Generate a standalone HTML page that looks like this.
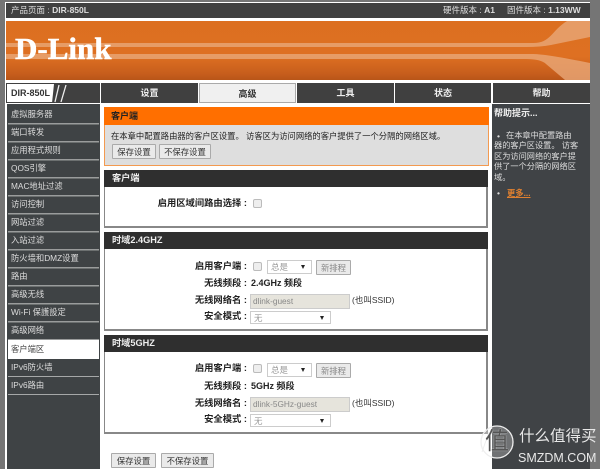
<!DOCTYPE html>
<html><head><meta charset="utf-8">
<style>
html,body{margin:0;padding:0;width:600px;height:469px;overflow:hidden;background:#757575;}
body{position:relative;font-family:"Liberation Sans","Noto Sans CJK SC",sans-serif;font-size:8.300px;color:#222;}
div,span{position:absolute;white-space:nowrap;box-sizing:border-box;}
.navt{top:83px;height:20px;background:#404040;color:#eee;font-weight:bold;text-align:center;line-height:21px;font-size:9px;}
.side{left:11px;height:17px;color:#ddd;line-height:17px;font-size:8.300px;}
.hd{left:104px;width:384px;height:17px;background:#2f2f2f;color:#eee;font-weight:bold;line-height:17px;padding-left:8px;font-size:9.200px;}
.box{left:104px;width:384px;background:#fff;border:1px solid #888;border-bottom-width:2px;border-right-width:2px;}
.lb{font-weight:bold;text-align:right;width:120px;left:127px;font-size:9.300px;line-height:12px;color:#222;}
.t{font-size:8.500px;line-height:12px;}
.btn{background:#eaeaea;border:1px solid #aaa;height:15px;line-height:14px;text-align:center;font-size:8.400px;color:#333;border-radius:1px;}
.cb{width:9px;height:9px;background:#eee;border:1px solid #bbb;border-radius:2px;}
.sel{background:#fff;border:1px solid #ccc;height:13px;line-height:12px;padding-left:3px;color:#999;font-size:8.500px;}
.sel i{position:absolute;right:6px;top:4px;width:0;height:0;border-left:2.500px solid transparent;border-right:2.500px solid transparent;border-top:4px solid #222;}
.inp{left:250px;width:100px;height:15px;background:#e6e4dc;border:1px solid #ccc;line-height:13px;padding-left:2px;color:#888;font-size:8.300px;}
</style></head><body>
<!-- page -->
<div style="left:5px;top:2px;width:585px;height:467px;background:#fff"></div>
<!-- top bar -->
<div style="left:6px;top:3px;width:584px;height:15px;background:#404040"></div>
<div class="t" style="left:11px;top:4px;color:#ddd">产品页面 : <b>DIR-850L</b></div>
<div class="t" style="left:443px;top:4px;color:#ddd">硬件版本 : <b>A1</b></div>
<div class="t" style="left:507px;top:4px;color:#ddd">固件版本 : <b>1.13WW</b></div>
<!-- banner -->
<div style="left:6px;top:21px;width:584px;height:59px;background:linear-gradient(#dc6f20 0,#de7022 60%,#c65d1c 90%,#b85518 100%)"></div>
<svg style="position:absolute;left:6px;top:21px" width="584" height="59" viewBox="0 0 584 59">
<path d="M0 22H527C545 22 545 10 561 0H584V16L545 24Q535 26 520 26H0Z" fill="#e8a878" opacity=".8"/>
<path d="M0 33H527Q540 33 584 42V59H559L540 43Q535 38 520 38H0Z" fill="#e8a878" opacity=".8"/>
</svg>
<div style="left:15px;top:33px;font-family:'Liberation Serif',serif;font-weight:bold;font-size:31px;line-height:32px;color:#fff;-webkit-text-stroke:.5px #fff">D-Link</div>
<!-- nav -->
<div style="left:6px;top:83px;width:94px;height:20px;background:#404040"></div>
<div style="left:7px;top:84px;width:47px;height:18px;background:#fff;clip-path:polygon(0 0,100% 0,96% 100%,0 100%);font-weight:bold;font-size:9px;line-height:18px;padding-left:4px;color:#333;overflow:hidden">DIR-850L</div>
<svg style="position:absolute;left:52px;top:83px" width="16" height="20"><path d="M3 19L7 2M9 19L14 2" stroke="#eee" stroke-width="1.300" fill="none"/></svg>
<div class="navt" style="left:101px;width:97px">设置</div>
<div class="navt" style="left:199px;width:97px;background:#f0f0f0;color:#333;border:1px solid #aaa">高级</div>
<div class="navt" style="left:297px;width:97px">工具</div>
<div class="navt" style="left:395px;width:96px">状态</div>
<div class="navt" style="left:493px;width:97px">帮助</div>
<!-- sidebar -->
<div style="left:7px;top:104px;width:93px;height:365px;background:#3f4345"></div>
<div style="left:8px;top:123px;width:91px;height:236px;background:repeating-linear-gradient(#9a9c9c 0,#9a9c9c 1.500px,#3f4345 1.500px,#3f4345 18px)"></div>
<div style="left:8px;top:340px;width:91px;height:19px;background:#fff"></div>
<div style="left:8px;top:376px;width:91px;height:1px;background:#a6a8a8"></div>
<div style="left:8px;top:394px;width:91px;height:1px;background:#a6a8a8"></div>
<div class="side" style="top:106px">虚拟服务器</div>
<div class="side" style="top:124px">端口转发</div>
<div class="side" style="top:142px">应用程式规则</div>
<div class="side" style="top:160px">QOS引擎</div>
<div class="side" style="top:178px">MAC地址过滤</div>
<div class="side" style="top:196px">访问控制</div>
<div class="side" style="top:214px">网站过滤</div>
<div class="side" style="top:232px">入站过滤</div>
<div class="side" style="top:250px">防火墙和DMZ设置</div>
<div class="side" style="top:268px">路由</div>
<div class="side" style="top:286px">高级无线</div>
<div class="side" style="top:304px">Wi-Fi 保護設定</div>
<div class="side" style="top:322px">高级网络</div>
<div class="side" style="top:340px;color:#444;height:19px;line-height:19px">客户端区</div>
<div class="side" style="top:359px">IPv6防火墙</div>
<div class="side" style="top:377px">IPv6路由</div>
<!-- panel 1 -->
<div style="left:104px;top:107px;width:385px;height:59px;background:#dedede;border:1px solid #f39a50"></div>
<div style="left:104px;top:107px;width:385px;height:18px;background:#ff6f00;color:#222;font-weight:bold;line-height:18px;padding-left:7px;font-size:9px">客户端</div>
<div class="t" style="left:111px;top:130px;color:#222;font-size:8.300px">在本章中配置路由器的客户区设置。 访客区为访问网络的客户提供了一个分隔的网络区域。</div>
<div class="btn" style="left:112px;top:144px;width:44px">保存设置</div>
<div class="btn" style="left:159px;top:144px;width:52px">不保存设置</div>
<!-- panel 2 -->
<div class="box" style="top:170px;height:58px"></div>
<div class="hd" style="top:170px">客户端</div>
<div class="lb" style="top:197px">启用区域间路由选择 :</div>
<div class="cb" style="left:253px;top:199px"></div>
<!-- panel 3 -->
<div class="box" style="top:232px;height:99px"></div>
<div class="hd" style="top:232px">时域2.4GHZ</div>
<div class="lb" style="top:260px">启用客户端 :</div>
<div class="cb" style="left:253px;top:262px"></div>
<div class="sel" style="left:267px;top:260px;width:45px;height:14px">总是<i></i></div>
<div class="btn" style="left:316px;top:260px;width:35px;color:#888">新排程</div>
<div class="lb" style="top:277px">无线频段 :</div>
<div class="t" style="left:251px;top:277px;font-weight:bold;font-size:9px">2.4GHz 频段</div>
<div class="lb" style="top:294px">无线网络名 :</div>
<div class="inp" style="top:294px">dlink-guest</div>
<div class="t" style="left:352px;top:294px;color:#333">(也叫SSID)</div>
<div class="lb" style="top:310px">安全模式 :</div>
<div class="sel" style="left:250px;top:311px;width:81px">无<i></i></div>
<!-- panel 4 -->
<div class="box" style="top:335px;height:99px"></div>
<div class="hd" style="top:335px">时域5GHZ</div>
<div class="lb" style="top:362px">启用客户端 :</div>
<div class="cb" style="left:253px;top:364px"></div>
<div class="sel" style="left:267px;top:363px;width:45px;height:14px">总是<i></i></div>
<div class="btn" style="left:316px;top:363px;width:35px;color:#888">新排程</div>
<div class="lb" style="top:380px">无线频段 :</div>
<div class="t" style="left:251px;top:380px;font-weight:bold;font-size:9px">5GHz 频段</div>
<div class="lb" style="top:397px">无线网络名 :</div>
<div class="inp" style="top:397px">dlink-5GHz-guest</div>
<div class="t" style="left:352px;top:397px;color:#333">(也叫SSID)</div>
<div class="lb" style="top:413px">安全模式 :</div>
<div class="sel" style="left:250px;top:414px;width:81px">无<i></i></div>
<!-- bottom buttons -->
<div class="btn" style="left:111px;top:453px;width:45px">保存设置</div>
<div class="btn" style="left:161px;top:453px;width:53px">不保存设置</div>
<!-- help -->
<div style="left:492px;top:104px;width:98px;height:365px;background:#404346"></div>
<div class="t" style="left:494px;top:107px;color:#eee;font-weight:bold;font-size:9px">帮助提示...</div>
<div class="t" style="left:497px;top:130px;color:#ddd">•</div>
<div style="left:506px;top:131px;color:#ddd;font-size:8.200px;line-height:10.400px">在本章中配置路由</div>
<div style="left:494px;top:141.400px;color:#ddd;font-size:8.200px;line-height:10.400px">器的客户区设置。 访客<br>区为访问网络的客户提<br>供了一个分隔的网络区<br>域。</div>
<div class="t" style="left:497px;top:187px;color:#ddd">•</div>
<div class="t" style="left:507px;top:187px;color:#e08030;font-weight:bold;text-decoration:underline;font-size:8.300px">更多...</div>
<!-- watermark -->
<svg style="position:absolute;left:478px;top:424px" width="42" height="42" viewBox="0 0 42 42"><circle cx="19" cy="18" r="16" fill="rgba(255,255,255,.25)" stroke="#eee" stroke-width="1.300"/><path d="M4 28L11 8" stroke="#eee" stroke-width="1" fill="none"/></svg>
<div style="left:485px;top:430px;font-size:24px;line-height:24px;color:#555;text-shadow:0 0 1px #fff">值</div>
<div style="left:519px;top:428px;font-size:15.500px;line-height:18px;color:#e8e8e8">什么值得买</div>
<div style="left:518px;top:451px;font-size:12.500px;line-height:14px;color:#e8e8e8">SMZDM.COM</div>
</body></html>
